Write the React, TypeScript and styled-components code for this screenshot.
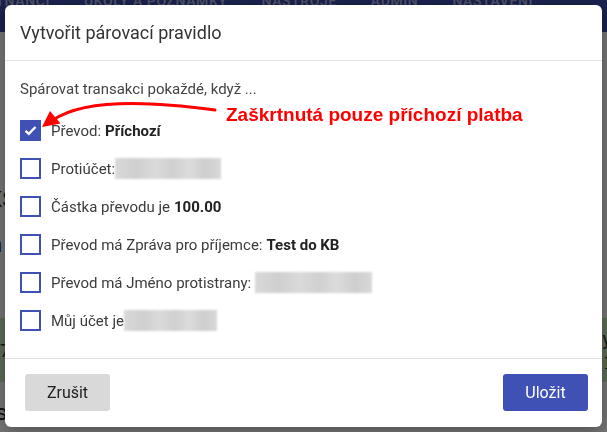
import React from "react";
import styled, { createGlobalStyle } from "styled-components";

const GlobalStyle = createGlobalStyle`
  html, body {
    margin: 0;
    padding: 0;
    width: 607px;
    height: 432px;
    overflow: hidden;
    font-family: Roboto, "Noto Sans", sans-serif;
  }
`;

const Page = styled.div`
  width: 607px;
  height: 432px;
  background: #eeeeee;
  display: flex;
  flex-direction: column;
  overflow: hidden;
`;

const NavBar = styled.div`
  height: 32px;
  background: #36469f;
  display: flex;
  gap: 34px;
  flex-shrink: 0;
  overflow: hidden;
`;

const NavItem = styled.span`
  font-size: 14px;
  font-weight: 500;
  color: rgba(255, 255, 255, 0.55);
  margin-top: -7px;
  white-space: nowrap;
  letter-spacing: 0.6px;
`;

const NavClip = styled.span`
  width: 50px;
  display: flex;
  justify-content: flex-end;
  overflow: hidden;
  flex-shrink: 0;
`;

const Content = styled.div`
  flex: 1;
  display: flex;
  flex-direction: column;
`;

const Fragment = styled.div<{ $shift: number; $gap: number }>`
  margin-left: ${(p) => p.$shift}px;
  margin-top: ${(p) => p.$gap}px;
  font-size: 22px;
  line-height: 26px;
  color: #222;
  white-space: nowrap;
`;

const GreenBand = styled.div`
  height: 64px;
  margin-top: 60px;
  background: #bcdcb2;
  display: flex;
  align-items: center;
  justify-content: space-between;
  font-size: 18px;
  color: #333;
`;

const BandEnd = styled.span`
  display: flex;
  flex-direction: column;
  align-items: flex-end;
  gap: 2px;
  line-height: 20px;
  margin-right: -4px;
`;

const Linked = styled.span`
  text-decoration: underline;
`;

const Backdrop = styled.div`
  position: fixed;
  inset: 0;
  background: rgba(0, 0, 0, 0.5);
  display: flex;
  align-items: center;
  justify-content: center;
`;

const Dialog = styled.div`
  width: 597px;
  height: 422px;
  margin-top: -1px;
  background: #fff;
  border-radius: 6px;
  box-shadow: 0 4px 18px rgba(0, 0, 0, 0.35);
  display: flex;
  flex-direction: column;
  overflow: hidden;
`;

const Header = styled.div`
  height: 55px;
  padding: 0 15px;
  display: flex;
  align-items: center;
  border-bottom: 1px solid #e2e2e2;
  flex-shrink: 0;
`;

const Title = styled.h2`
  margin: 0;
  font-size: 18px;
  font-weight: 400;
  color: #333;
`;

const Body = styled.div`
  position: relative;
  flex: 1;
  padding: 18px 15px 0;
`;

const Intro = styled.div`
  font-size: 15px;
  line-height: 20px;
  color: #444;
`;

const List = styled.div`
  margin-top: 13px;
  display: flex;
  flex-direction: column;
`;

const Row = styled.label`
  height: 38px;
  display: flex;
  align-items: center;
  gap: 10px;
  font-size: 15px;
  color: #3c3c3c;
`;

const Box = styled.span<{ $checked?: boolean }>`
  width: 21px;
  height: 21px;
  box-sizing: border-box;
  border: 2px solid #3f51b5;
  background: ${(p) => (p.$checked ? "#3f51b5" : "#fff")};
  display: flex;
  align-items: center;
  justify-content: center;
  flex-shrink: 0;
`;

const Strong = styled.b`
  font-weight: 700;
  color: #222;
  margin-left: 4px;
`;

const Hidden = styled.span<{ $w: number; $pull: number }>`
  display: inline-block;
  width: ${(p) => p.$w}px;
  height: 21px;
  margin-left: ${(p) => -p.$pull}px;
  background: linear-gradient(
    90deg,
    #d9d9d9 0%,
    #cfcfcf 20%,
    #dadada 38%,
    #d0d0d0 55%,
    #dcdcdc 70%,
    #cecece 85%,
    #d8d8d8 100%
  );
  filter: blur(1.2px);
`;

const Note = styled.div`
  position: absolute;
  left: 221px;
  top: 43px;
  font-family: "Liberation Sans", Arial, sans-serif;
  font-weight: 700;
  font-size: 19px;
  line-height: 22px;
  color: #ff0000;
  white-space: nowrap;
`;

const Arrow = styled.svg`
  position: absolute;
  left: 0;
  top: 0;
  pointer-events: none;
`;

const Footer = styled.div`
  height: 68px;
  border-top: 1px solid #e2e2e2;
  display: flex;
  align-items: center;
  justify-content: space-between;
  padding: 0 14px 0 20px;
  flex-shrink: 0;
`;

const Button = styled.button<{ $primary?: boolean }>`
  width: 85px;
  height: 37px;
  border: none;
  border-radius: 3px;
  font-family: Roboto, sans-serif;
  font-size: 16px;
  background: ${(p) => (p.$primary ? "#3f51b5" : "#d9d9d9")};
  color: ${(p) => (p.$primary ? "#fff" : "#222")};
  cursor: pointer;
`;

const Check = () => (
  <svg width="13" height="11" viewBox="0 0 13 11">
    <path d="M1.5 5.8 L4.8 8.8 L11.5 2" fill="none" stroke="#fff" strokeWidth="2.4" />
  </svg>
);

export default function App() {
  return (
    <>
      <GlobalStyle />
      <Page>
        <NavBar>
          <NavClip>
            <NavItem>ZAMĚSTNANCI</NavItem>
          </NavClip>
          <NavItem>ÚKOLY A POZNÁMKY</NavItem>
          <NavItem>NÁSTROJE</NavItem>
          <NavItem>ADMIN</NavItem>
          <NavItem>NASTAVENÍ</NavItem>
        </NavBar>
        <Content>
          <Fragment $shift={-40} $gap={53}>Filtr</Fragment>
          <Fragment $shift={-118} $gap={76}>Transakce KS</Fragment>
          <Fragment $shift={-88} $gap={19}>Položkan</Fragment>
          <GreenBand>
            <span>7</span>
            <BandEnd>
              <span>y</span>
              <Linked>t</Linked>
            </BandEnd>
          </GreenBand>
          <Fragment $shift={-4} $gap={18}>s</Fragment>
        </Content>
      </Page>
      <Backdrop>
        <Dialog>
          <Header>
            <Title>Vytvořit párovací pravidlo</Title>
          </Header>
          <Body>
            <Intro>Spárovat transakci pokaždé, když ...</Intro>
            <List>
              <Row>
                <Box $checked>
                  <Check />
                </Box>
                <span>
                  Převod:<Strong>Příchozí</Strong>
                </span>
              </Row>
              <Row>
                <Box />
                <span>Protiúčet:</span>
                <Hidden $w={106} $pull={10} />
              </Row>
              <Row>
                <Box />
                <span>
                  Částka převodu je<Strong>100.00</Strong>
                </span>
              </Row>
              <Row>
                <Box />
                <span>
                  Převod má Zpráva pro příjemce:<Strong>Test do KB</Strong>
                </span>
              </Row>
              <Row>
                <Box />
                <span>Převod má Jméno protistrany:</span>
                <Hidden $w={117} $pull={6} />
              </Row>
              <Row>
                <Box />
                <span>Můj účet je</span>
                <Hidden $w={93} $pull={10} />
              </Row>
            </List>
            <Note>Zaškrtnutá pouze příchozí platba</Note>
            <Arrow width="597" height="297" viewBox="0 0 597 297">
              <path
                d="M210 49 C145 40, 78 38, 48 59"
                fill="none"
                stroke="#ff0000"
                strokeWidth="3"
                strokeLinecap="round"
              />
              <path d="M37 66 L45 50 L55.5 62.5 Z" fill="#ff0000" />
            </Arrow>
          </Body>
          <Footer>
            <Button>Zrušit</Button>
            <Button $primary>Uložit</Button>
          </Footer>
        </Dialog>
      </Backdrop>
    </>
  );
}
